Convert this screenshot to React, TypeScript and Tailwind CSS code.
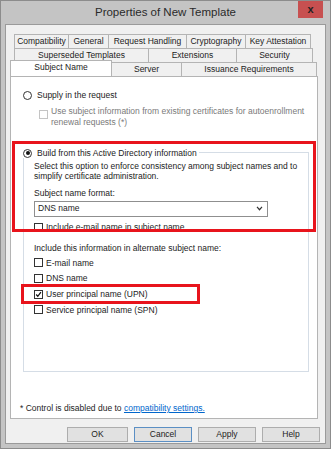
import type { ReactNode } from 'react'

const row1 = [
  ['Compatibility', 55],
  ['General', 41],
  ['Request Handling', 79],
  ['Cryptography', 60],
  ['Key Attestation', 66],
] as const

const row2 = [
  ['Superseded Templates', 135],
  ['Extensions', 89],
  ['Security', 77],
] as const

function Tab({ label, w }: { label: string; w: number }) {
  return (
    <div
      className="-ml-px flex h-[14px] items-center justify-center border border-b-0 border-[#b4b4b4] bg-[#f0f0f0] first:ml-0"
      style={{ width: w }}
    >
      {label}
    </div>
  )
}

function Box({ checked, disabled }: { checked?: boolean; disabled?: boolean }) {
  return (
    <span
      className={`flex h-[9px] w-[9px] shrink-0 items-center justify-center border bg-white ${
        disabled ? 'border-[#c4c4c4]' : 'border-[#333]'
      }`}
    >
      {checked && (
        <svg viewBox="0 0 9 9" className="h-[9px] w-[9px]">
          <path d="M1.5 4.5 L3.6 6.8 L7.6 1.6" fill="none" stroke="#111" strokeWidth="1.6" />
        </svg>
      )}
    </span>
  )
}

function Radio({ on }: { on?: boolean }) {
  return (
    <span className="flex h-[9px] w-[9px] shrink-0 items-center justify-center rounded-full border border-[#333] bg-white">
      {on && <span className="h-[4px] w-[4px] rounded-full bg-[#111]" />}
    </span>
  )
}

function Check({ children, checked }: { children: ReactNode; checked?: boolean }) {
  return (
    <div className="flex h-[15.7px] items-center gap-[3px]">
      <Box checked={checked} />
      <span>{children}</span>
    </div>
  )
}

function Button({ label, w, focus }: { label: string; w: number; focus?: boolean }) {
  return (
    <div
      className={`flex h-[15px] items-center justify-center border bg-[#e1e1e1] ${
        focus ? 'border-[#5b8fc4]' : 'border-[#adadad]'
      }`}
      style={{ width: w }}
    >
      {label}
    </div>
  )
}

export default function App() {
  return (
    <div className="relative h-[449px] w-[331px] overflow-hidden border border-[#8c8c8c] bg-[#c4c4c4] font-['Liberation_Sans',Arial,sans-serif] text-[8.5px] leading-none text-[#1c1c1c]">
      {/* Title bar */}
      <div className="relative flex h-[23px] items-center justify-center text-[11.5px] text-[#2a2a2a]">
        Properties of New Template
        <div className="absolute top-[-1px] right-[7px] flex h-[18px] w-[25px] items-center justify-center bg-[#c75050] text-[11px] font-bold text-[#222]">
          x
        </div>
      </div>

      {/* Client area */}
      <div className="mx-[4px] h-[420px] border border-[#9a9a9a] bg-[#f0f0f0] px-[4px] pt-[9px]">
        <div className="ml-[4px] flex">
          {row1.map(([l, w]) => (
            <Tab key={l} label={l} w={w} />
          ))}
        </div>
        <div className="ml-[4px] flex">
          {row2.map(([l, w]) => (
            <Tab key={l} label={l} w={w} />
          ))}
        </div>
        <div className="flex h-[14px] items-end">
          <div className="relative z-10 flex h-[16px] w-[102px] items-center justify-center border border-b-0 border-[#b4b4b4] bg-white pb-[2px]">
            Subject Name
          </div>
          <Tab label="Server" w={71} />
          <Tab label="Issuance Requirements" w={136} />
        </div>

        {/* Panel */}
        <div className="relative h-[343px] w-[308px] border border-[#b4b4b4] bg-white pt-[13px] pl-[12px]">
          <div className="flex h-[10px] items-center gap-[5px]">
            <Radio />
            <span>Supply in the request</span>
          </div>
          <div className="mt-[6px] ml-[16px] flex gap-[3px]">
            <span className="mt-[4px]">
              <Box disabled />
            </span>
            <div className="leading-[11px] text-[#7a7a7a]">
              Use subject information from existing certificates for autoenrollment
              <br />
              renewal requests (*)
            </div>
          </div>

          {/* Group */}
          <div className="mt-[20px] w-[286px]">
            <div className="flex h-[10px]">
              <div className="flex items-center gap-[5px] bg-white pr-[2px]">
                <Radio on />
                <span>Build from this Active Directory information</span>
              </div>
              <div className="mt-[4px] flex-1 border-t border-r border-[#d5dde6]" />
            </div>
            <div className="h-[214px] border-r border-b border-l border-[#d5dde6] pt-[4px] pl-[10px]">
              <div className="leading-[9.5px]">
                Select this option to enforce consistency among subject names and to
                <br />
                simplify certificate administration.
              </div>
              <div className="mt-[8px]">Subject name format:</div>
              <div className="mt-[3px] flex h-[16px] w-[234px] items-center justify-between border border-[#8f8f8f] bg-white pr-[4px] pl-[3px]">
                <span>DNS name</span>
                <svg viewBox="0 0 8 6" className="h-[5px] w-[7px]">
                  <path d="M1 1 L4 4.5 L7 1" fill="none" stroke="#333" strokeWidth="1.4" />
                </svg>
              </div>
              <div className="mt-[6px] flex items-center gap-[3px]">
                <Box />
                <span>Include e-mail name in subject name</span>
              </div>
              <div className="mt-[12px]">Include this information in alternate subject name:</div>
              <div className="mt-[3px]">
                <Check>E-mail name</Check>
                <Check>DNS name</Check>
                <Check checked>User principal name (UPN)</Check>
                <Check>Service principal name (SPN)</Check>
              </div>
            </div>
          </div>

          <div className="absolute top-[327px] left-[9px]">
            * Control is disabled due to{' '}
            <span className="text-[#0066cc] underline">compatibility settings.</span>
          </div>

          {/* Annotations */}
          <div className="pointer-events-none absolute top-[64px] left-px h-[91px] w-[304px] border-[3px] border-[#e8141c]" />
          <div className="pointer-events-none absolute top-[207px] left-[10px] h-[20px] w-[179px] border-[3px] border-[#e8141c]" />
        </div>

        <div className="mt-[8px] flex justify-end gap-[6px] pr-px">
          <Button label="OK" w={61} />
          <Button label="Cancel" w={58} focus />
          <Button label="Apply" w={58} />
          <Button label="Help" w={58} />
        </div>
      </div>
    </div>
  )
}
